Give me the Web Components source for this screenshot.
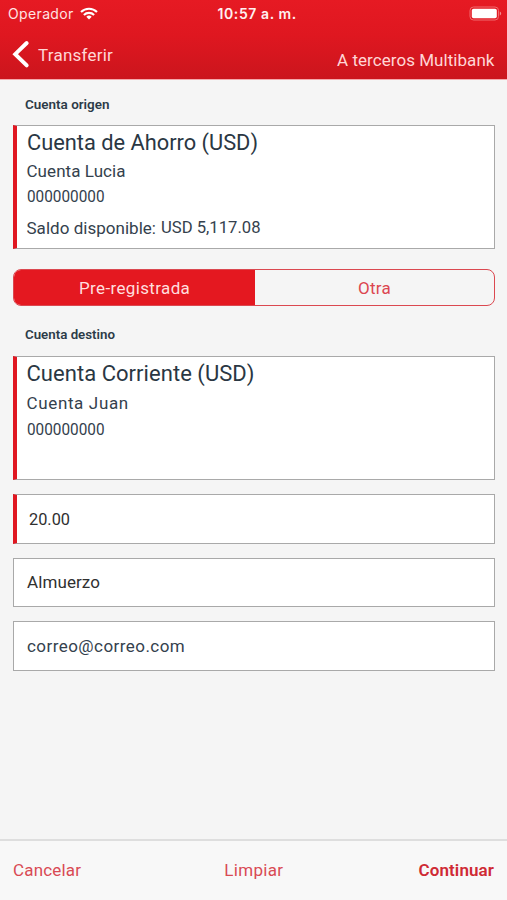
<!DOCTYPE html>
<html lang="es">
<head>
<meta charset="utf-8">
<title>Transferir</title>
<style>
html,body{margin:0;height:100%}
body{font-family:Roboto,"Liberation Sans",sans-serif;background:#f5f5f5}
</style>
</head>
<body>
<transfer-screen></transfer-screen>
<script>
const attach = (el, html) => { el.attachShadow({mode:'open'}).innerHTML = html; };

/* One line of text, tracked or condensed to the width given in "fit". */
customElements.define('fit-text', class extends HTMLElement {
  connectedCallback() {
    if (this.shadowRoot) return;
    attach(this, `<style>
      :host{display:block;white-space:pre;line-height:20px;font-size:17px}
      span{display:inline-block;transform-origin:0 50%}
    </style><span><slot></slot></span>`);
    const span = this.shadowRoot.querySelector('span');
    const fit = parseFloat(this.getAttribute('fit'));
    this.style.width = fit + 'px';
    const natural = span.getBoundingClientRect().width;
    if (natural > fit) span.style.transform = `scaleX(${fit / natural})`;
    else span.style.letterSpacing = (fit - natural) / (this.textContent.length - 0.5) + 'px';
  }
});

customElements.define('status-bar', class extends HTMLElement {
  constructor() {
    super();
    attach(this, `<style>
      :host{display:grid;grid-template-columns:1fr auto 1fr;align-items:center;height:28px;padding:0 5px 0 8px;box-sizing:border-box;color:#ffe3e3;font-family:Inter,sans-serif}
      .left{display:flex;align-items:center;gap:6px}
      .right{display:flex;justify-content:flex-end}
      fit-text{font-size:14px}
      .time{font-weight:600;color:#fff0f0;margin-left:4px}
      svg{display:block}
      .left svg{margin-top:-1px}
      .right svg{margin-top:-2px}
    </style>
    <div class="left"><fit-text fit="65.5">Operador</fit-text>
      <svg width="18" height="13" viewBox="0 0 18 13" fill="none" stroke="#fff" stroke-width="2.1">
        <path d="M1 5.1a11.3 11.3 0 0 1 16 0"/><path d="M3.9 8a7.2 7.2 0 0 1 10.2 0"/>
        <path d="M9 12.4 6.3 9.8a3.9 3.9 0 0 1 5.4 0z" fill="#fff" stroke="none"/>
      </svg></div>
    <fit-text class="time" fit="79">10:57 a. m.</fit-text>
    <div class="right"><svg width="33" height="15" viewBox="0 0 33 15">
      <rect x="1" y="1" width="28.5" height="13" rx="3.5" fill="none" stroke="#f06a6e"/>
      <rect x="2.8" y="2.8" width="25" height="9.4" rx="1.8" fill="#fff"/>
      <path d="M30.8 5.4a2.3 2.3 0 0 1 0 4.2z" fill="#f28a8d"/></svg></div>`);
  }
});

customElements.define('nav-bar', class extends HTMLElement {
  constructor() {
    super();
    attach(this, `<style>
      :host{display:flex;justify-content:space-between;align-items:flex-start;height:51px;padding:0 12.5px 0 12px;box-sizing:border-box;color:#ffd6d6}
      .back{display:flex;align-items:flex-start;gap:8px;padding-top:12px}
      ::slotted([slot=title]){margin-top:22px}
      ::slotted([slot=back]){margin-top:5px}
      svg{display:block}
    </style>
    <div class="back"><svg width="18" height="29" viewBox="0 0 18 29" fill="none" stroke="#fff" stroke-width="3.9" stroke-linecap="round"><path d="M14.7 3 3.2 14.2 14.7 25.4"/></svg><slot name="back"></slot></div>
    <slot name="title"></slot>`);
  }
});

customElements.define('app-header', class extends HTMLElement {
  constructor() {
    super();
    attach(this, `<style>:host{display:block;height:79px;box-sizing:border-box;background:linear-gradient(#e61a23,#df1720 45%,#cb151d);box-shadow:0 1px 0 #f5a9ac}</style><slot></slot>`);
  }
});

/* Bordered white box; "required" adds the red left edge. */
customElements.define('field-box', class extends HTMLElement {
  constructor() {
    super();
    attach(this, `<style>
      :host{display:block;box-sizing:border-box;background:#fff;border:1.5px solid #a9a9a9;padding-left:13px;color:#34414d}
      :host([required]){border-left:4px solid #e01721;padding-left:9.5px}
    </style><slot></slot>`);
  }
});

customElements.define('segmented-control', class extends HTMLElement {
  constructor() {
    super();
    attach(this, `<style>
      :host{display:grid;grid-template-columns:241px 1fr;height:37px;box-sizing:border-box;border:1px solid #db4850;border-radius:8px;overflow:hidden;color:#dc4650}
      div{display:flex;align-items:center;justify-content:center}
      .on{background:#e41820;color:#ffdede}
    </style><div class="on"><slot name="on"></slot></div><div><slot name="off"></slot></div>`);
  }
});

customElements.define('bottom-bar', class extends HTMLElement {
  constructor() {
    super();
    attach(this, `<style>
      :host{display:flex;justify-content:space-between;height:61px;box-sizing:border-box;border-top:2px solid #dedede;background:#f8f8f8;padding:19px 13px 0;color:#d94a54}
    </style><slot></slot>`);
  }
});

customElements.define('transfer-screen', class extends HTMLElement {
  constructor() {
    super();
    attach(this, `<style>
      :host{display:flex;flex-direction:column;height:900px;width:507px;background:#f5f5f5;overflow:hidden}
      main{flex:1;display:flex;flex-direction:column;padding:0 12px 0 13px}
      .label{font-size:13.5px;font-weight:600;color:#2c3b48;margin-left:12.4px}
      .big{font-size:22px;line-height:28px;color:#2a3743}
      .card{height:124px}
      .input{height:49.5px;display:flex;align-items:center;margin-top:14px}
      .row{display:flex;gap:4.5px}
      .dark{color:#303030}
      .strong{font-weight:600;color:#cf2a34}
    </style>
    <app-header>
      <status-bar></status-bar>
      <nav-bar><fit-text slot="back" fit="75">Transferir</fit-text><fit-text slot="title" fit="157.5">A terceros Multibank</fit-text></nav-bar>
    </app-header>
    <main>
      <fit-text class="label" fit="84.5" style="margin-top:15px">Cuenta origen</fit-text>
      <field-box class="card" required style="margin-top:11px">
        <fit-text class="big" fit="231" style="margin-top:3px">Cuenta de Ahorro (USD)</fit-text>
        <fit-text fit="99" style="margin-top:4px">Cuenta Lucia</fit-text>
        <fit-text fit="77.5" style="margin-top:5px">000000000</fit-text>
        <div class="row"><fit-text fit="129.5" style="margin-top:12px">Saldo disponible:</fit-text><fit-text fit="99.5" style="margin-top:11px">USD 5,117.08</fit-text></div>
      </field-box>
      <segmented-control style="margin-top:20px"><fit-text slot="on" fit="111">Pre-registrada</fit-text><fit-text slot="off" fit="33">Otra</fit-text></segmented-control>
      <fit-text class="label" fit="90" style="margin-top:18px">Cuenta destino</fit-text>
      <field-box class="card" required style="margin-top:12px">
        <fit-text class="big" fit="228" style="margin-top:3px">Cuenta Corriente (USD)</fit-text>
        <fit-text fit="102" style="margin-top:5px">Cuenta Juan</fit-text>
        <fit-text fit="77.5" style="margin-top:6px">000000000</fit-text>
      </field-box>
      <field-box class="input dark" required><fit-text class="dark" fit="41" style="margin-left:2px">20.00</fit-text></field-box>
      <field-box class="input"><fit-text class="dark" fit="73">Almuerzo</fit-text></field-box>
      <field-box class="input"><fit-text fit="158">correo@correo.com</fit-text></field-box>
    </main>
    <bottom-bar><fit-text fit="68">Cancelar</fit-text><fit-text fit="59" style="margin-left:8px">Limpiar</fit-text><fit-text class="strong" fit="75.5">Continuar</fit-text></bottom-bar>`);
  }
});
</script>
</body>
</html>
